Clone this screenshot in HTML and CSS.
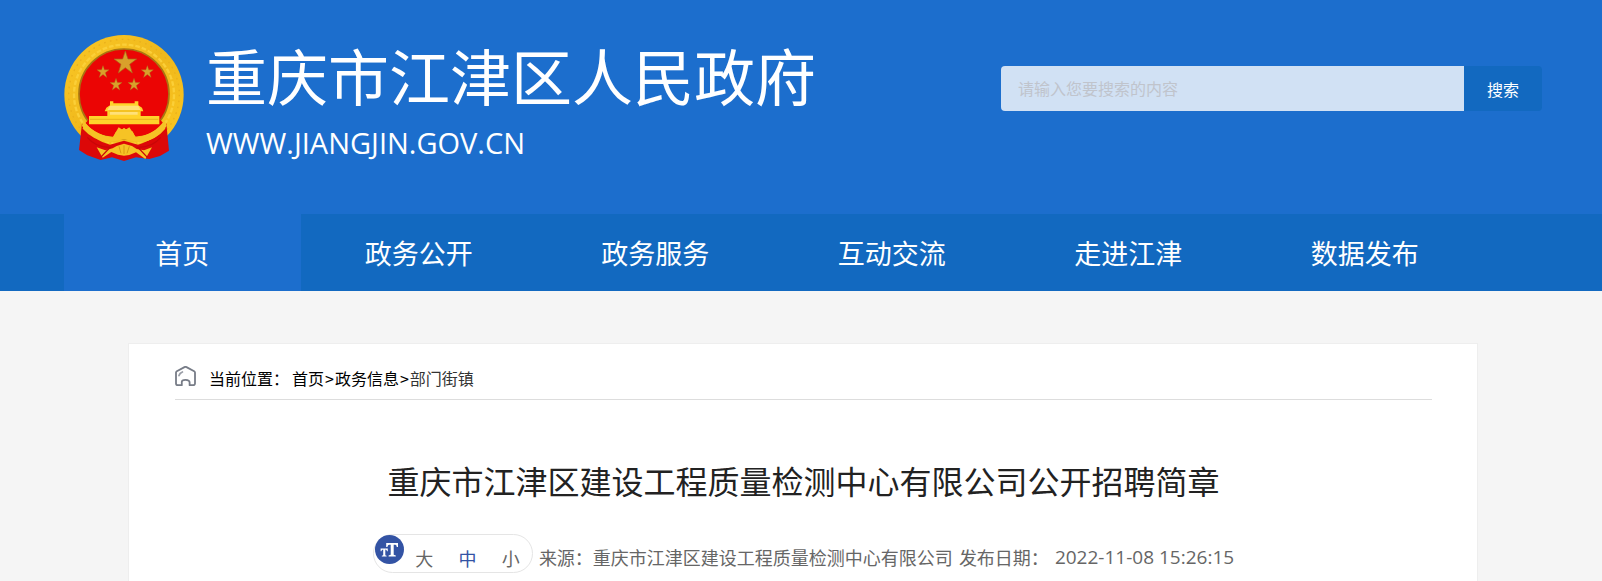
FILE: index.html
```html
<!DOCTYPE html>
<html lang="zh-CN">
<head>
<meta charset="utf-8">
<title>重庆市江津区人民政府</title>
<link rel="stylesheet" href="styles.css">
</head>
<body>
<header class="site-header">
  <a class="brand" href="#">
    <svg class="emblem" viewBox="42 45 360 378" aria-hidden="true">
      <defs>
        <linearGradient id="gold" x1="0" y1="0" x2="1" y2="1">
          <stop offset="0" stop-color="#fbc826"/><stop offset=".5" stop-color="#efb81c"/><stop offset="1" stop-color="#fcc820"/>
        </linearGradient>
        <path id="star" d="M0-34 8-10 34-10 13 6 21 32 0 16-21 32-13 6-34-10-8-10Z"/>
      </defs>
      <circle cx="222" cy="224" r="179" fill="url(#gold)"/>
      <circle cx="222" cy="224" r="166" fill="none" stroke="#e9b01c" stroke-width="4" stroke-dasharray="5 13"/>
      <circle cx="222" cy="224" r="150" fill="none" stroke="#fbcf38" stroke-width="7" stroke-dasharray="14 6"/>
      <circle cx="222" cy="222" r="135" fill="#eb0504" stroke="#a87512" stroke-width="5"/>
      <path d="M96 310Q128 362 180 374L222 362 264 374Q318 360 349 310L357 392 330 408 298 417 258 412 222 423 186 412 152 420 112 406 87 390Z" fill="#dc0808"/>
      <path d="M104 304Q142 352 196 350Q206 330 222 324Q240 330 248 350Q304 350 340 304L346 326Q314 364 270 366L222 356 176 366Q130 362 98 326Z" fill="#f4bd1e"/>
      <path d="M122 292Q135 309 148 315H300Q316 309 324 292L340 310Q304 350 248 350Q240 330 222 324Q206 330 196 350Q142 350 106 310Z" fill="#eb0504"/>
      <path d="M100 300Q128 344 190 354L198 335 210 340 222 323 236 340 248 334 256 353Q312 346 344 300L350 318Q320 362 270 367L222 358 174 367Q126 360 96 318Z" fill="#f6c325"/>
      <path d="M140 382 166 391 188 385 200 378 222 371 246 378 260 387 282 391 306 382 286 417 258 397 238 405 222 407 204 404 184 396 158 413Z" fill="#f6c325"/>
      <path d="M188 352 206 322 222 332 238 322 258 352 222 358Z" fill="#f6c325"/>
      <path d="M112 352Q136 382 180 382L152 412M332 352Q308 382 264 382L292 412" fill="none" stroke="#c90608" stroke-width="4"/>
      <path d="M222 376V402M207 379 213 400M238 379 231 400" stroke="#d99a12" stroke-width="3"/>
      <path d="M180 244H190V250H254V244H265V256L276 263 280 274H272V288H328V313H117V288H172V274H164L169 263 180 256Z" fill="#ffd32b"/>
      <path d="M180 257H265L272 270H172ZM180 276H263V284H180Z" fill="#ffe179"/>
      <path d="M120 298H325M176 273H270" stroke="#eab31c" stroke-width="3"/>
      <g fill="#d9a02b" stroke="#a8671b" stroke-width="2">
        <use href="#star" transform="translate(226 127)"/>
        <use href="#star" transform="translate(159 155) scale(.54)"/>
        <use href="#star" transform="translate(292 155) scale(.54)"/>
        <use href="#star" transform="translate(198 193) scale(.54)"/>
        <use href="#star" transform="translate(252 193) scale(.54)"/>
      </g>
    </svg>
    <span class="brand-text">
      <span class="brand-name">重庆市江津区人民政府</span>
      <span class="brand-url">WWW.JIANGJIN.GOV.CN</span>
    </span>
  </a>
  <form class="search" role="search">
    <input class="search-input" type="text" placeholder="请输入您要搜索的内容" aria-label="搜索内容">
    <button class="search-button" type="button">搜索</button>
  </form>
</header>
<nav class="main-nav">
  <ul class="nav-list">
    <li><a class="nav-link active" href="#">首页</a></li>
    <li><a class="nav-link" href="#">政务公开</a></li>
    <li><a class="nav-link" href="#">政务服务</a></li>
    <li><a class="nav-link" href="#">互动交流</a></li>
    <li><a class="nav-link" href="#">走进江津</a></li>
    <li><a class="nav-link" href="#">数据发布</a></li>
  </ul>
</nav>
<main class="article">
  <div class="breadcrumb">
    <svg class="home-icon" viewBox="0 0 21 20" fill="none" stroke="#777c87" stroke-width="1.8" stroke-linejoin="round" stroke-linecap="round" aria-hidden="true">
      <path d="M1 6.6Q1 5.7 1.8 5.2L9.5 1.1Q10.5.6 11.5 1.1L19.2 5.2Q20 5.7 20 6.6V17.6Q20 19.2 18.4 19.2H14.6V16.6Q14.6 13.8 10.5 13.8T6.8 16.6V19.2H2.6Q1 19.2 1 17.6Z"/>
      <path d="M4 9.6Q4.8 7 7.4 6" stroke="#9a9ea7"/>
    </svg>
    <span class="crumb-label">当前位置：</span>
    <span class="crumbs"><a href="#">首页</a><span class="separator">&gt;</span><a href="#">政务信息</a><span class="separator">&gt;</span><a class="current" href="#">部门街镇</a></span>
  </div>
  <h1 class="title">重庆市江津区建设工程质量检测中心有限公司公开招聘简章</h1>
  <div class="meta">
    <div class="font-size">
      <svg class="size-icon" viewBox="0 0 29 29" aria-hidden="true">
        <circle cx="14.5" cy="14.5" r="14.5" fill="#3353a4"/>
        <path fill="#fff" d="M11.2 8H23V12H21.8Q21.5 9.8 20.3 9.8H18.7V19.8L20.8 20.4V21.6H13.6V20.4L15.7 19.8V9.8H14.2Q12.8 9.8 12.4 12H11.2ZM5.6 13.4H12.8V16.2H12Q11.8 14.6 10.3 14.6V20.2L11.6 20.7V21.6H6.8V20.7L8.2 20.2V14.6Q6.6 14.6 6.4 16.2H5.6Z"/>
      </svg>
      <button class="size-button" type="button">大</button>
      <button class="size-button selected" type="button">中</button>
      <button class="size-button" type="button">小</button>
    </div>
    <span>来源：重庆市江津区建设工程质量检测中心有限公司</span>
    <span>发布日期：</span>
    <time class="date" datetime="2022-11-08T15:26:15">2022-11-08 15:26:15</time>
  </div>
</main>
</body>
</html>
```
FILE: styles.css
```css
* {
  box-sizing: border-box;
}

body {
  margin: 0;
  background: #f5f5f5;
  color: #000;
  font: 16px/24px "Noto Sans CJK SC", sans-serif;
  overflow: hidden auto;
  scrollbar-width: none;
}

a {
  color: inherit;
  text-decoration: none;
}

button,
input {
  border: 0;
  padding: 0;
  background: none;
  color: inherit;
  font: inherit;
}

.site-header {
  display: flex;
  justify-content: space-between;
  align-items: flex-start;
  padding: 35px 60px 51px 64px;
  background: #1c6ecd;
  color: #fff;
}

.brand {
  display: flex;
  gap: 22px;
}

.emblem {
  width: 120px;
  height: 126px;
  flex: none;
}

.brand-text {
  display: flex;
  flex-direction: column;
  padding-top: 4px;
  white-space: nowrap;
}

.brand-name {
  font-size: 61px;
  line-height: 72px;
}

.brand-url {
  font-family: "Open Sans", sans-serif;
  font-size: 29px;
  line-height: 40px;
  padding-top: 12px;
}

.search {
  display: flex;
  width: 541px;
  height: 45px;
  margin-top: 31px;
  border-radius: 4px;
  overflow: hidden;
}

.search-input {
  flex: 1;
  min-width: 0;
  padding: 0 0 2px 17px;
  background: #d1e1f4;
  color: #333;
}

.search-input::placeholder {
  color: #c0c4cc;
  opacity: 1;
}

.search-button {
  width: 78px;
  background: #1269c0;
}

.main-nav {
  padding: 0 119px 0 64px;
  background: #1269c0;
  color: #fff;
}

.nav-list {
  display: grid;
  grid-template-columns: repeat(6, 1fr);
  margin: 0;
  padding: 0;
  list-style: none;
}

.nav-link {
  display: block;
  font-size: 27px;
  line-height: 77px;
  text-align: center;
}

.nav-link.active {
  background: #1c6ecd;
}

.article {
  margin: 52px 124px 0 128px;
  padding: 18px 45px 40px 46px;
  border: 1px solid #eee;
  background: #fff;
}

.breadcrumb {
  display: flex;
  padding: 4px 0 9px;
  border-bottom: 1px solid #ddd;
}

.home-icon {
  width: 21px;
  height: 20px;
  margin-right: 13px;
}

.crumb-label {
  margin-right: 3px;
}

.separator {
  padding: 0 1px;
}

.current {
  color: #333;
}

.title {
  margin: 56px 0 30px;
  color: #222;
  font-size: 32px;
  font-weight: 400;
  line-height: 48px;
  text-align: center;
}

.meta {
  display: flex;
  justify-content: center;
  gap: 6px;
  color: #666;
  font-size: 18px;
  line-height: 46px;
}

.font-size {
  display: flex;
  width: 160px;
  height: 39px;
  padding: 0 12px 0 1px;
  border: 1px solid #e5e5e5;
  border-radius: 20px;
  justify-content: space-between;
}

.size-icon {
  width: 29px;
  height: 29px;
  margin-right: -14px;
}

.size-button {
  line-height: 46px;
}

.selected {
  color: #3353a4;
}

.date {
  font-family: "Open Sans", sans-serif;
  font-size: 19px;
}
```
